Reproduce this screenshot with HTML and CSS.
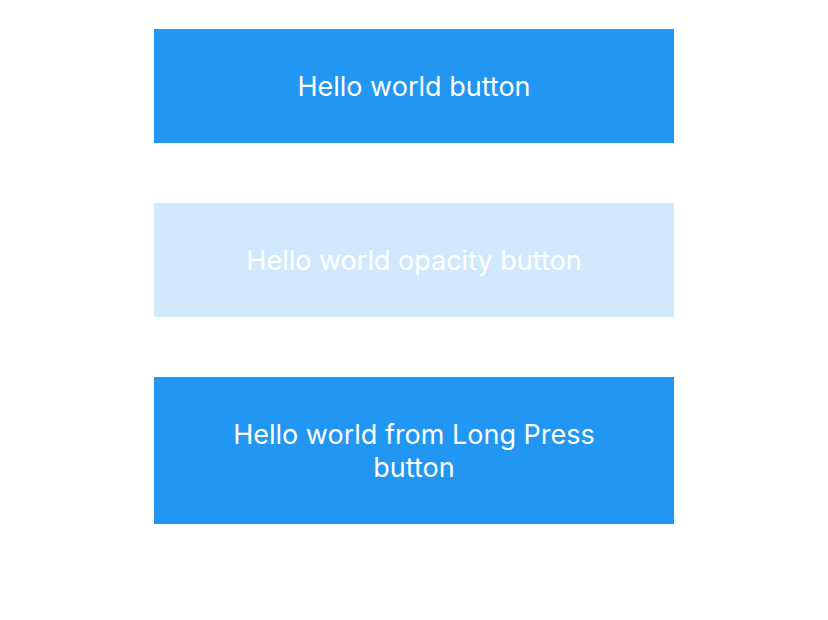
FILE: index.html
```html
<!DOCTYPE html>
<html>
<head>
<meta charset="utf-8">
<link rel="stylesheet" href="styles.css">
</head>
<body>
<div class="list">
  <div class="btn">Hello world button</div>
  <div class="btn faded">Hello world opacity button</div>
  <div class="btn">Hello world from Long Press button</div>
</div>
</body>
</html>
```
FILE: styles.css
```css
html, body {
  margin: 0;
  padding: 0;
  background: #ffffff;
}
.list {
  display: flex;
  flex-direction: column;
  align-items: center;
  gap: 60px;
  padding-top: 29px;
}
.btn {
  width: 520px;
  box-sizing: border-box;
  padding: 41px 50px 40px;
  background: #2196F3;
  color: #ffffff;
  font-family: Inter, "Noto Sans", sans-serif;
  font-size: 27px;
  line-height: 33px;
  text-align: center;
}
.faded {
  opacity: 0.2;
}
```
